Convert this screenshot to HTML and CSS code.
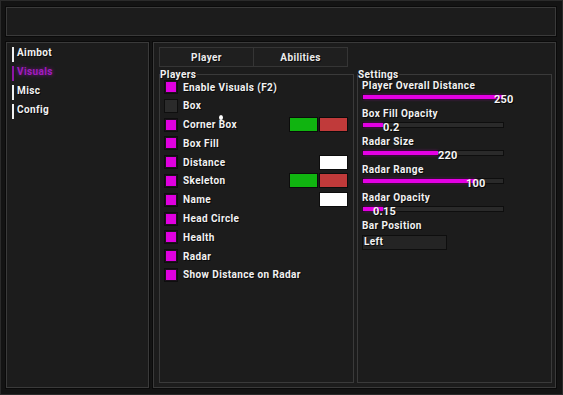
FILE: index.html
```html
<!DOCTYPE html>
<html lang="en">
  <head>
    <meta charset="UTF-8" />
    <title>Menu</title>
    <link rel="stylesheet" href="styles.css">
  </head>
  <body>
    <div class="window">
      <header class="topbar"></header>

      <div class="main">
        <aside class="sidebar">
          <div class="nav-item"><span class="nav-bar"></span><span>Aimbot</span></div>
          <div class="nav-item active"><span class="nav-bar"></span><span>Visuals</span></div>
          <div class="nav-item"><span class="nav-bar"></span><span>Misc</span></div>
          <div class="nav-item"><span class="nav-bar"></span><span>Config</span></div>
        </aside>

        <section class="content">
          <div class="tabs">
            <div class="tab">Player</div>
            <div class="tab">Abilities</div>
          </div>

          <div class="groups">
            <fieldset class="group">
              <legend>Players</legend>
              <div class="row"><span class="check on"></span><span>Enable Visuals (F2)</span></div>
              <div class="row"><span class="check"></span><span>Box</span></div>
              <div class="row">
                <span class="check on"></span><span>Corner Box</span>
                <div class="swatches"><span class="swatch green"></span><span class="swatch red"></span></div>
              </div>
              <div class="row"><span class="check on"></span><span>Box Fill</span></div>
              <div class="row">
                <span class="check on"></span><span>Distance</span>
                <div class="swatches"><span class="swatch white"></span></div>
              </div>
              <div class="row">
                <span class="check on"></span><span>Skeleton</span>
                <div class="swatches"><span class="swatch green"></span><span class="swatch red"></span></div>
              </div>
              <div class="row">
                <span class="check on"></span><span>Name</span>
                <div class="swatches"><span class="swatch white"></span></div>
              </div>
              <div class="row"><span class="check on"></span><span>Head Circle</span></div>
              <div class="row"><span class="check on"></span><span>Health</span></div>
              <div class="row"><span class="check on"></span><span>Radar</span></div>
              <div class="row"><span class="check on"></span><span>Show Distance on Radar</span></div>
            </fieldset>

            <fieldset class="group">
              <legend>Settings</legend>
              <div class="slider">
                <div class="slider-label">Player Overall Distance</div>
                <div class="track"><div class="fill" style="width:140px"></div><span class="value" style="left:131px">250</span></div>
              </div>
              <div class="slider">
                <div class="slider-label">Box Fill Opacity</div>
                <div class="track"><div class="fill" style="width:20px"></div><span class="value" style="left:20px">0.2</span></div>
              </div>
              <div class="slider">
                <div class="slider-label">Radar Size</div>
                <div class="track"><div class="fill" style="width:75px"></div><span class="value" style="left:75px">220</span></div>
              </div>
              <div class="slider">
                <div class="slider-label">Radar Range</div>
                <div class="track"><div class="fill" style="width:113px"></div><span class="value" style="left:103px">100</span></div>
              </div>
              <div class="slider">
                <div class="slider-label">Radar Opacity</div>
                <div class="track"><div class="fill" style="width:20px"></div><span class="value" style="left:10px">0.15</span></div>
              </div>
              <div class="combo-block">
                <div class="slider-label">Bar Position</div>
                <div class="combo">Left</div>
              </div>
            </fieldset>
          </div>
        </section>
      </div>

      <span class="cursor-dot"></span>
    </div>
  </body>
</html>
```

FILE: styles.css
```css
body {
  margin: 0;
  padding: 0;
  background-color: #131313;
  font-family: Roboto, "Liberation Sans", sans-serif;
  font-weight: bold;
  font-size: 10px;
  letter-spacing: 0.4px;
  color: #f2f2f2;
}

.window {
  position: relative;
  width: 563px;
  height: 395px;
  box-sizing: border-box;
  border: 1px solid #2a2a2a;
  padding: 6px 6px 6px 5px;
  display: flex;
  flex-direction: column;
  gap: 6px;
  background-color: #131313;
}

.topbar {
  height: 29px;
  box-sizing: border-box;
  background-color: #1c1c1c;
  border: 1px solid #3a3a3a;
  box-shadow: 0 0 0 1px #0a0a0a;
}

.main {
  height: 346px;
  display: flex;
  gap: 4px;
}

.sidebar,
.content {
  box-sizing: border-box;
  background-color: #1c1c1c;
  border: 1px solid #3a3a3a;
  box-shadow: 0 0 0 1px #0a0a0a;
}

.sidebar {
  width: 143px;
  padding: 4px 5px;
  display: flex;
  flex-direction: column;
  gap: 4px;
}

.nav-item {
  height: 15px;
  display: flex;
  align-items: flex-start;
  gap: 3px;
  line-height: 12px;
  text-shadow: 1px 1px 0 rgba(0, 0, 0, 0.7);
}

.nav-bar {
  width: 2px;
  height: 15px;
  background-color: #f0f0f0;
}

.nav-item.active {
  color: #a11cbf;
  text-shadow: 0 0 4px rgba(170, 20, 200, 0.7);
}

.nav-item.active .nav-bar {
  background-color: #8e16a6;
}

.content {
  width: 403px;
  padding: 4px 3px 4px 5px;
  display: flex;
  flex-direction: column;
  gap: 2px;
}

.tabs {
  width: 189px;
  height: 20px;
  display: flex;
  box-sizing: border-box;
  border: 1px solid #353535;
  background-color: #1f1f1f;
}

.tab {
  flex: 1;
  text-align: center;
  line-height: 19px;
  color: #ececec;
  text-shadow: 1px 1px 0 rgba(0, 0, 0, 0.7);
}

.tab + .tab {
  border-left: 1px solid #353535;
}

.groups {
  display: grid;
  grid-template-columns: 195px 195px;
  gap: 3px;
  height: 314px;
}

.group {
  margin: 0;
  min-width: 0;
  padding: 0 5px 4px 4px;
  border: 1px solid #3a3a3a;
  display: flex;
  flex-direction: column;
}

.group legend {
  padding: 0;
  margin-left: -4px;
  line-height: 11px;
  color: #f2f2f2;
  text-shadow: 1px 1px 0 rgba(0, 0, 0, 0.7);
}

.group:first-child {
  gap: 4.8px;
}

.row {
  height: 14px;
  display: flex;
  align-items: center;
  gap: 5px;
  line-height: 13px;
  text-shadow: 1px 1px 0 rgba(0, 0, 0, 0.7);
}

.check {
  width: 14px;
  height: 14px;
  box-sizing: border-box;
  border: 1px solid #0e0e0e;
  padding: 1px;
  background-color: #2b2b2b;
  flex-shrink: 0;
}

.check.on {
  background-color: #1e0f1e;
}

.check.on::after {
  content: "";
  display: block;
  width: 10px;
  height: 10px;
  background-color: #e000e0;
}

.swatches {
  margin-left: auto;
  display: flex;
  gap: 1px;
}

.swatch {
  width: 29px;
  height: 15px;
  box-sizing: border-box;
  border: 1px solid #0c0c0c;
}

.swatch.green {
  background-color: #10b410;
}

.swatch.red {
  background-color: #c03a3a;
}

.swatch.white {
  background-color: #ffffff;
}

.slider {
  height: 28px;
}

.slider-label {
  height: 14px;
  line-height: 12px;
  text-shadow: 1px 1px 0 rgba(0, 0, 0, 0.7);
}

.track {
  position: relative;
  width: 142px;
  height: 6px;
  box-sizing: border-box;
  border: 1px solid #0e0e0e;
  background-color: #2a2a2a;
}

.fill {
  height: 100%;
  background-color: #e400e4;
  box-shadow: 0 0 3px rgba(255, 0, 255, 0.5);
}

.value {
  position: absolute;
  top: -1px;
  font-size: 11px;
  line-height: 12px;
  letter-spacing: 0.2px;
  color: #f4f4f4;
  text-shadow: 1px 1px 0 rgba(0, 0, 0, 0.8);
}

.combo {
  margin-top: 1px;
  width: 85px;
  height: 15px;
  box-sizing: border-box;
  border: 1px solid #0e0e0e;
  background-color: #242424;
  padding-left: 1px;
  line-height: 12px;
  text-shadow: 1px 1px 0 rgba(0, 0, 0, 0.7);
}

.cursor-dot {
  position: absolute;
  left: 218px;
  top: 114px;
  width: 4px;
  height: 5px;
  border-radius: 50%;
  background-color: #ffffff;
}
```
